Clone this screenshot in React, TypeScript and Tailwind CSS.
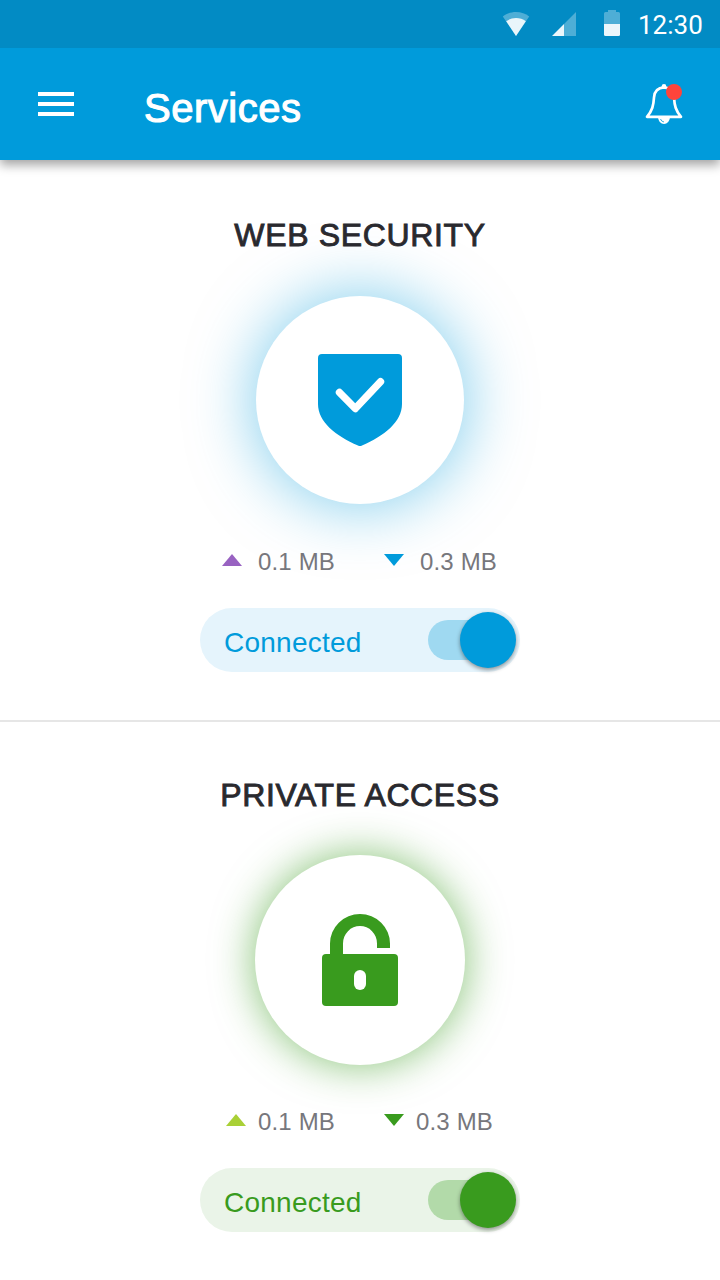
import type { ReactNode } from "react";

function WifiIcon() {
  return (
    <svg width="28" height="24" viewBox="0 0 28 24">
      <path d="M14 0C9 0 4.300 1.700 .8 4.400L14 24 27.200 4.400C23.700 1.700 19 0 14 0Z" fill="#fff" fillOpacity=".3" />
      <path d="M14 6C10.300 6 7 7.200 4.200 9.200L14 24 23.800 9.200C21 7.200 17.700 6 14 6Z" fill="#fff" fillOpacity=".88" />
    </svg>
  );
}

function SignalIcon() {
  return (
    <svg width="24" height="24" viewBox="0 0 24 24">
      <path d="M24 0V24H12V12Z" fill="#fff" fillOpacity=".3" />
      <path d="M12 12V24H0Z" fill="#fff" fillOpacity=".92" />
    </svg>
  );
}

function BatteryIcon() {
  return (
    <svg width="16" height="26" viewBox="0 0 16 26">
      <path d="M0 14V3.500Q0 2 1.500 2H4V0H12V2H14.500Q16 2 16 3.500V14Z" fill="#fff" fillOpacity=".3" />
      <path d="M0 14H16V24.500Q16 26 14.500 26H1.500Q0 26 0 24.500Z" fill="#fff" fillOpacity=".92" />
    </svg>
  );
}

function BellIcon() {
  return (
    <svg width="40" height="44" viewBox="0 0 40 44">
      <g fill="none" stroke="#fff" strokeWidth="2.700" strokeLinecap="round" strokeLinejoin="round">
        <path d="M20 5.400C13.200 5.800 10.400 10 10 15.500C9.500 23.500 8.400 28.500 3 34.800H37C31.600 28.500 30.500 23.500 30 15.500C29.600 10 26.800 5.800 20 5.400Z" />
      </g>
      <circle cx="20" cy="4.200" r="2.300" fill="#fff" />
      <path d="M14 35.500H26Q25 42 20 42Q15 42 14 35.500Z" fill="#fff" />
      <path d="M16.500 37Q17.300 39.600 20 40" fill="none" stroke="#009bdb" strokeWidth=".8" />
      <circle cx="30" cy="10" r="8" fill="#ff443b" />
    </svg>
  );
}

function ShieldIcon() {
  return (
    <svg width="84" height="92" viewBox="0 0 84 92">
      <path d="M4 0H80Q84 0 84 4V50C84 68 66 82 44 91.500Q42 92.500 40 91.500C18 82 0 68 0 50V4Q0 0 4 0Z" fill="#009bdb" />
      <path d="M21.500 38.500L37.300 54.500L62.500 27.700" fill="none" stroke="#fff" strokeWidth="7.400" strokeLinecap="round" strokeLinejoin="round" />
    </svg>
  );
}

function LockIcon() {
  return (
    <svg width="76" height="92" viewBox="0 0 76 92">
      <path d="M8 42V29.500A30 29.500 0 0 1 68 29.500V34H55V29.500A17 17.500 0 0 0 21 29.500V42Z" fill="#399b1e" />
      <rect y="40" width="76" height="52" rx="4" fill="#399b1e" />
      <rect x="32" y="56" width="12" height="20" rx="6" fill="#fff" />
    </svg>
  );
}

type ServiceProps = {
  title: string;
  className: string;
  titleClass: string;
  circleClass: string;
  icon: ReactNode;
  upClass: string;
  downClass: string;
  statsClass: string;
  labelGap: string;
  pillClass: string;
  trackClass: string;
  knobClass: string;
};

function Service(p: ServiceProps) {
  return (
    <section className={`flex h-[560px] flex-col items-center ${p.className}`}>
      <h2 className={`relative z-10 text-[32px] leading-10 whitespace-nowrap text-[#29292e] [-webkit-text-stroke:0.9px_#29292e] ${p.titleClass}`}>
        {p.title}
      </h2>
      <div className="mt-10 flex h-[210px] items-center justify-center">
        <div className={`flex items-center justify-center rounded-full bg-white ${p.circleClass}`}>{p.icon}</div>
      </div>
      <div className={`relative mt-[41px] flex h-8 w-80 items-center text-2xl leading-8 tracking-[0.15px] text-[#77777c] ${p.statsClass}`}>
        <svg width="20" height="12" viewBox="0 0 20 12" className={`-mt-1 ${p.upClass}`}>
          <path d="M0 12L10 0L20 12Z" fill="currentColor" />
        </svg>
        <span className={`w-[126px] ${p.labelGap}`}>0.1 MB</span>
        <svg width="20" height="12" viewBox="0 0 20 12" className={`-mt-1 ${p.downClass}`}>
          <path d="M0 0L10 12L20 0Z" fill="currentColor" />
        </svg>
        <span className={p.labelGap}>0.3 MB</span>
      </div>
      <div className={`mt-[30px] flex h-16 w-80 items-center justify-between rounded-full pr-1 pl-6 ${p.pillClass}`}>
        <span className="pt-1.5 text-[28px] tracking-[0.25px]">Connected</span>
        <div className="flex items-center">
          <div className={`h-10 w-[72px] rounded-full ${p.trackClass}`} />
          <div className={`relative -ml-10 size-14 rounded-full shadow-[0_2px_4px_rgba(0,0,0,0.4)] ${p.knobClass}`} />
        </div>
      </div>
    </section>
  );
}

export default function App() {
  return (
    <div className="h-[1280px] w-[720px] overflow-hidden bg-white font-['Liberation_Sans',Arial,sans-serif]">
      <header className="relative z-20 bg-[#009bdb] text-white shadow-[0_5px_10px_rgba(0,0,0,0.36)]">
        <div className="flex h-12 items-center justify-end bg-[#028bc4] pr-[18px]">
          <WifiIcon />
          <div className="ml-[22px]"><SignalIcon /></div>
          <div className="mb-0.5 ml-7"><BatteryIcon /></div>
          <span className="ml-[18px] w-16 pt-0.5 text-[26px] leading-8 whitespace-nowrap font-['Roboto',sans-serif]">12:30</span>
        </div>
        <div className="flex h-28 items-center pr-9 pl-[38px]">
          <button aria-label="Menu" className="flex w-9 flex-col gap-1.5">
            <span className="h-1 bg-white" />
            <span className="h-1 bg-white" />
            <span className="h-1 bg-white" />
          </button>
          <h1 className="mt-2 ml-[70px] text-[40px] leading-[48px] tracking-[0.5px] [-webkit-text-stroke:1.1px_white]">Services</h1>
          <button aria-label="Notifications" className="ml-auto"><BellIcon /></button>
        </div>
      </header>
      <main>
        <Service
          title="WEB SECURITY"
          className="pt-[55px]"
          titleClass="tracking-[0.65px]"
          circleClass="size-[208px] shadow-[0_0_64px_2px_rgba(0,155,219,0.5)]"
          icon={<ShieldIcon />}
          statsClass="pl-[22px]"
          upClass="text-[#9862c1]"
          downClass="text-[#009bdb]"
          labelGap="ml-4"
          pillClass="bg-[#e5f4fc] text-[#009bdb]"
          trackClass="bg-[#9fd9f1]"
          knobClass="bg-[#009bdb]"
        />
        <Service
          title="PRIVATE ACCESS"
          className="border-t-2 border-[#e6e6e6] pt-[53px]"
          titleClass="tracking-[0.6px]"
          circleClass="size-[210px] shadow-[0_0_42px_1px_rgba(57,155,30,0.6)]"
          icon={<LockIcon />}
          statsClass="pl-[26px]"
          upClass="text-[#a9d036]"
          downClass="text-[#399b1e]"
          labelGap="ml-3"
          pillClass="bg-[#eaf4e8] text-[#399b1e]"
          trackClass="bg-[#b2daa9]"
          knobClass="bg-[#399b1e]"
        />
      </main>
    </div>
  );
}
